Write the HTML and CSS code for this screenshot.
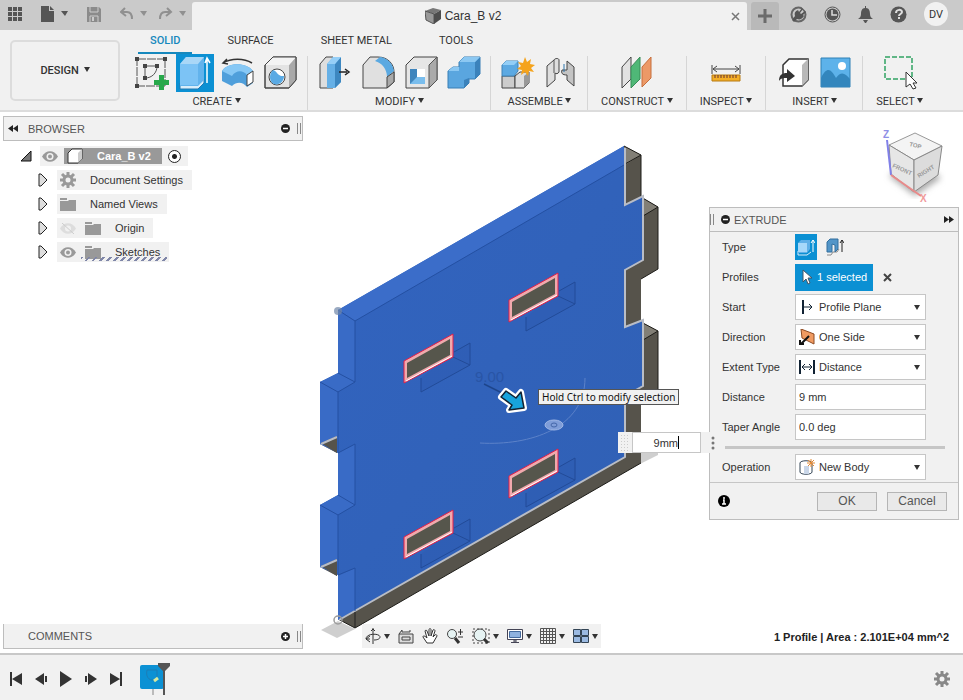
FILE: index.html
```html
<!DOCTYPE html>
<html lang="en">
<head>
    <meta charset="UTF-8">
    <meta name="viewport" content="width=device-width, initial-scale=1.0">
    <title>Cara_B v2</title>
    <link rel="stylesheet" href="styles.css">
</head>
<body>

    <!-- Top bar -->
    <header class="topbar">
        <div class="quick">
            <button class="icon-btn" aria-label="Data panel"><svg width="14" height="14" viewBox="0 0 14 14" fill="#555"><path d="M0 0h4v4H0zM5 0h4v4H5zM10 0h4v4h-4zM0 5h4v4H0zM5 5h4v4H5zM10 5h4v4h-4zM0 10h4v4H0zM5 10h4v4H5zM10 10h4v4h-4z"/></svg></button>
            <button class="icon-btn file-btn" aria-label="File"><svg width="27" height="16" viewBox="0 0 27 16" fill="#555"><path d="M0 0h8v5h5v11H0zM9 0l4 4H9zM20 5h7l-3 5z"/></svg></button>
            <button class="icon-btn save-btn" aria-label="Save"><svg width="14" height="15" viewBox="0 0 14 15"><path d="M0 0h12l2 2v13H0z" fill="#8b8b8b"/><path d="M3 0v5h8V0M3 15V9h8v6" fill="none" stroke="#ccc"/><path d="M5 10h2v4H5z" fill="#ccc"/></svg></button>
            <button class="icon-btn undo-btn" aria-label="Undo"><svg width="27" height="14" viewBox="0 0 27 14"><path d="M5 1L1 5l5 4M1 5h6c4 0 5 3 5 7" fill="none" stroke="#909090" stroke-width="2"/><path d="M20 4h7l-3 5z" fill="#909090"/></svg></button>
            <button class="icon-btn redo-btn" aria-label="Redo"><svg width="27" height="14" viewBox="0 0 27 14"><path d="M8 1l4 4-5 4M12 5H6c-4 0-5 3-5 7" fill="none" stroke="#909090" stroke-width="2"/><path d="M20 4h7l-3 5z" fill="#909090"/></svg></button>
        </div>
        <div class="doc-tab">
            <span class="doc-name">
                <svg width="16" height="16" viewBox="0 0 16 16"><path d="M0 3l8-3 8 2-7 4z" fill="#777"/><path d="M0 3l9 3v10l-8-4z" fill="#999" stroke="#555"/><path d="M9 6l7-4v9l-7 5z" fill="#4d4d4d"/></svg>
                Cara_B v2
            </span>
            <button class="icon-btn" aria-label="Close tab"><svg width="9" height="9" viewBox="0 0 9 9"><path d="M1 1l7 7M8 1L1 8" stroke="#777" stroke-width="1.5"/></svg></button>
        </div>
        <button class="icon-btn new-tab" aria-label="New tab"><svg width="14" height="14" viewBox="0 0 14 14"><path d="M7 0v14M0 7h14" stroke="#6b6b6b" stroke-width="3"/></svg></button>
        <div class="account">
            <button class="icon-btn" aria-label="Extensions"><svg width="17" height="17" viewBox="0 0 17 17"><circle cx="8.500" cy="8.500" r="7" fill="none" stroke="#666" stroke-width="2"/><path d="M2 14l3-4c-1-4 1-5 3-6l1 2 3-4 1 1-3 4 1 1 4-3 1 1-3 3 1 1c-2 3-4 4-7 3l-3 3z" fill="#555"/><path d="M12 0l5 5" stroke="#ccc" stroke-width="2"/></svg></button>
            <button class="icon-btn" aria-label="Job status"><svg width="17" height="17" viewBox="0 0 17 17"><circle cx="8.500" cy="8.500" r="7.500" fill="none" stroke="#555"/><circle cx="8.500" cy="8.500" r="6" fill="#555"/><path d="M8 4v5h5" fill="none" stroke="#ddd" stroke-width="1.500"/></svg></button>
            <button class="icon-btn" aria-label="Notifications"><svg width="15" height="17" viewBox="0 0 15 17" fill="#555"><path d="M7 0h1v2c3 0 4 3 4 6 0 2 1 4 3 5H0c2-1 3-3 3-5 0-3 1-6 4-6zM5 14h5l-2 3H7z"/></svg></button>
            <button class="icon-btn" aria-label="Help"><svg width="17" height="17" viewBox="0 0 17 17"><circle cx="8.500" cy="8.500" r="8" fill="#555"/><path d="M6 7c0-4 6-4 6-1 0 2-3 2-3 4M9 11v2" fill="none" stroke="#ddd" stroke-width="2"/></svg></button>
            <button class="avatar">DV</button>
        </div>
    </header>

    <!-- Ribbon -->
    <div class="ribbon">
        <button class="workspace-btn">DESIGN <span class="caret"></span></button>
        <div class="ribbon-main">
            <nav class="tabs">
                <a class="tab active" href="#solid">SOLID</a>
                <a class="tab" href="#surface">SURFACE</a>
                <a class="tab" href="#sheet">SHEET METAL</a>
                <a class="tab" href="#tools">TOOLS</a>
            </nav>
            <div class="groups">
                <section class="group first">
                    <div class="tools">
                        <button class="tool" aria-label="Create sketch"><svg viewBox="0 0 34 34"><path d="M2 3h28M30 3v27M30 30H2M2 30V3" fill="none" stroke="#555" stroke-dasharray="9 1"/><path d="M10 22V10h12c0 7-5 12-12 12" fill="none" stroke="#555"/><path d="M0 1h4v4H0zM28 1h4v4h-4zM0 28h4v4H0zM8 8h4v4H8zM20 8h4v4h-4zM8 20h4v4H8z" fill="#444"/><path d="M24 19h5v5h5v5h-5v5h-5v-5h-5v-5h5z" fill="#27a84a"/></svg></button>
                        <button class="tool on" aria-label="Extrude"><svg viewBox="0 0 34 34"><path d="M2 27v6h18l6-6v-4" fill="#d8edfb" stroke="#2478b0"/><path d="M2 8l6-7h18v23l-6 6H2z" fill="#62b3ec"/><path d="M2 8l6-7h18l-6 7z" fill="#a9d7f7"/><path d="M2 8h18v21H2z" fill="#7cc3f5"/><path d="M29 27V3M27 7l2-5 3 5" fill="none" stroke="#fff" stroke-width="1.500"/></svg></button>
                        <button class="tool" aria-label="Revolve"><svg viewBox="0 0 34 34"><path d="M2 7c8-5 21-5 29 0M6 3L2 7l5 1" fill="none" stroke="#333" stroke-width="1.500"/><path d="M1 15c5-9 25-9 31 0v12l-6 4c-4-5-10-6-15-1l-10-5z" fill="#4f9fdb"/><path d="M1 15c5-9 25-9 31 0l-6 4c-4-5-11-5-15 1z" fill="#87c8f5"/><path d="M26 19l6-4v11l-6 4z" fill="#fff" stroke="#444"/></svg></button>
                        <button class="tool" aria-label="Hole"><svg viewBox="0 0 34 34"><path d="M1 9l8-8h23v23l-7 8H1z" fill="#e3e3e3" stroke="#444"/><path d="M25 9l7-8v23l-7 8z" fill="#a9a9a9"/><path d="M1 9l8-8h23l-7 8z" fill="#f3f3f3"/><path d="M1 9l8-8h23v23l-7 8H1z" fill="none" stroke="#444"/><circle cx="13" cy="21" r="8" fill="#fff" stroke="#444"/><path d="M9 14c4 1 5 7 11 6 0 10-14 12-14 1 0-3 1-5 3-7z" fill="#5aaae4"/></svg></button>
                    </div>
                    <button class="group-label">CREATE <span class="caret"></span></button>
                </section>
                <section class="group">
                    <div class="tools">
                        <button class="tool" aria-label="Press pull"><svg viewBox="0 0 34 34"><path d="M2 8l6-7h7v31H2z" fill="#dedede" stroke="#444"/><path d="M9 8l6-7h8v25l-6 6H9z" fill="#66b0e6"/><path d="M17 8l6-7v25l-6 6z" fill="#3d87c0"/><path d="M9 8l6-7h8l-6 7z" fill="#96cff7"/><path d="M21 16h8M27 13l4 3-4 3" fill="none" stroke="#222" stroke-width="1.500"/></svg></button>
                        <button class="tool" aria-label="Fillet"><svg viewBox="0 0 34 34"><path d="M2 9l7-8h8c10 0 16 7 16 15v10l-7 6H2z" fill="#e0e0e0" stroke="#444"/><path d="M14 5l5-4c8 1 13 7 14 14l-7 6c0-8-5-14-12-16z" fill="#5ba9e1"/><path d="M26 21l7-5v10l-7 6z" fill="#aaa" stroke="#444"/></svg></button>
                        <button class="tool" aria-label="Shell"><svg viewBox="0 0 34 34"><path d="M2 9l8-8h23v23l-8 8H2z" fill="#e6e6e6" stroke="#444"/><path d="M25 9l8-8v23l-8 8z" fill="#aaa" stroke="#555"/><path d="M6 13h15v15H6z" fill="#fff"/><path d="M6 13h7v8l8 1v6H6z" fill="#3f85bd"/><path d="M6 28l7-7h8v7z" fill="#79bded"/></svg></button>
                        <button class="tool" aria-label="Combine"><svg viewBox="0 0 34 34"><path d="M1 15l5-4h6V6l5-5h16v17l-5 5h-6v4l-5 5H1z" fill="#5aa6df" stroke="#397fb5"/><path d="M28 6l5-5v17l-5 5zM17 24l5-2v5l-5 5z" fill="#3b82bb"/><path d="M12 6l5-5h16l-5 5zM1 15l5-4h6v4z" fill="#8cc8f2"/></svg></button>
                    </div>
                    <button class="group-label">MODIFY <span class="caret"></span></button>
                </section>
                <section class="group">
                    <div class="tools">
                        <button class="tool" aria-label="New component"><svg viewBox="0 0 34 34"><path d="M1 20h13v12H1z" fill="#ccc" stroke="#444"/><path d="M14 20l5-4h9v11l-5 5h-9z" fill="#ddd" stroke="#444"/><path d="M23 20l5-4v11l-5 5z" fill="#999"/><path d="M1 9l4-4h12v10l-4 5H1z" fill="#5ca9e2" stroke="#3f82b5"/><path d="M1 9l4-4h12l-4 4z" fill="#93cef6"/><path d="M24 1l2 5 4-3-1 5 5 1-4 3 3 4-5-1-1 5-3-4-4 3 1-5-5-1 4-3-3-4 5 1z" fill="#f5a31c"/></svg></button>
                        <button class="tool" aria-label="Joint"><svg viewBox="0 0 34 34"><path d="M3 10l7-6c1-2 5-2 5 0v12c-1 2-3 2-4 1v7l-8 7z" fill="#dedede" stroke="#444"/><path d="M10 4v13" stroke="#555"/><path d="M23 5l7 6v19l-7-6v-5c-5 0-6-2-5-5h5z" fill="#c4c4c4" stroke="#444"/><path d="M20 8v8" stroke="#2f77ad"/></svg></button>
                    </div>
                    <button class="group-label">ASSEMBLE <span class="caret"></span></button>
                </section>
                <section class="group single">
                    <div class="tools">
                        <button class="tool" aria-label="Offset plane"><svg viewBox="0 0 34 34"><path d="M2 11l9-10v22l-9 9z" fill="#e2e2e2" stroke="#444"/><path d="M11 11l9-10v22l-9 9z" fill="#4fb877" stroke="#398c58"/><path d="M22 11l9-10v21l-9 9z" fill="#ec9967" stroke="#c66e3c"/></svg></button>
                    </div>
                    <button class="group-label">CONSTRUCT <span class="caret"></span></button>
                </section>
                <section class="group single">
                    <div class="tools">
                        <button class="tool" aria-label="Measure"><svg viewBox="0 0 34 34"><path d="M3 9v9M31 9v9M4 13h26M8 10l-4 3 4 3M26 10l4 3-4 3" fill="none" stroke="#444"/><path d="M3 19h28v6H3z" fill="#f4ae26" stroke="#b77b13"/><path d="M6 19v3M9 19v3M12 19v3M15 19v3M18 19v3M21 19v3M24 19v3M27 19v3" stroke="#633"/></svg></button>
                    </div>
                    <button class="group-label">INSPECT <span class="caret"></span></button>
                </section>
                <section class="group">
                    <div class="tools">
                        <button class="tool" aria-label="Insert derive"><svg viewBox="0 0 34 34"><path d="M7 9l6-6h19v21l-6 6H7z" fill="#fff" stroke="#333" stroke-width="1.500"/><path d="M26 9l6-6v21l-6 6z" fill="#b9b9b9"/><path d="M3 25c0-6 3-8 8-8v-4l8 7-8 6v-4c-4 0-6 0-8 3z" fill="#333"/></svg></button>
                        <button class="tool" aria-label="Insert image"><svg viewBox="0 0 34 34"><path d="M2 2h29v29H2z" fill="#5db2ea" stroke="#2f80b5"/><path d="M2 22c6-12 10-9 15 0 5-7 9-5 14 1v8H2z" fill="#3386bd"/><circle cx="23" cy="10" r="4" fill="#fff"/></svg></button>
                    </div>
                    <button class="group-label">INSERT <span class="caret"></span></button>
                </section>
                <section class="group single">
                    <div class="tools">
                        <button class="tool" aria-label="Select"><svg viewBox="0 0 34 34"><path d="M2 1h27v22H2z" fill="none" stroke="#31a263" stroke-width="1.500" stroke-dasharray="5 2"/><path d="M23 16v15l4-3 3 5 3-1-3-5h4z" fill="#fff" stroke="#333"/></svg></button>
                    </div>
                    <button class="group-label">SELECT <span class="caret"></span></button>
                </section>
            </div>
        </div>
    </div>

    <!-- Modelling canvas and the panels floating over it -->
    <main class="canvas">
        <svg class="model" width="350" height="510" viewBox="315 135 350 510">
            <defs>
                <linearGradient id="front" x1="0" y1="0" x2="1" y2="1"><stop offset="0" stop-color="#3264c0"/><stop offset="1" stop-color="#3060b4"/></linearGradient>
                <g id="slot">
                    <path d="M421 378v14l49-27v-22l-16 9M453 357l17 8" fill="#2c5bb0" fill-opacity=".4" stroke="#224b98"/>
                    <path d="M404 361l49-27v23l-49 26z" fill="#f0a9ad" stroke="#e21e48"/>
                    <path d="M406 381l46-25" stroke="#fff"/>
                    <path d="M407 363l43-24v16l-43 23z" fill="#56564c"/>
                </g>
            </defs>
            <!-- shadow -->
            <path d="M321 630l17-9 17 8-18 9zM640 464l18-9v-4h-18z" fill="#cfcfcf"/>
            <!-- back body -->
            <path d="M624 146l17 9v42l17 10v62l-17 10v43l17 9v62l-17 10v60L355 628l-17-9z" fill="#56534b"/>
            <path d="M624 146l17 9-16 10zM641 197l17 10-15 9zM641 322l17 9-15 9z" fill="#827f76"/>
            <path d="M624 146l17 9v42l17 10v62l-17 10M641 322l17 9v62M641 155l-16 9M658 207l-15 9M658 331l-15 9M641 463L355 628l-17-9" fill="none" stroke="#1d1c18"/>
            <path d="M320 444l17-9v18zM320 567l17-9v18z" fill="#56534b"/>
            <!-- preview body -->
            <path d="M338 310l286-164v59l19-9v64l-18 10v57l18-7v66l-18 10v61L338 620v-59l-18 6v-62l18-10v-58l-18 7v-62l18-9z" fill="url(#front)"/>
            <path d="M338 310l286-164v19L355 321z" fill="#3b6dc9"/>
            <path d="M338 310l17 11v61l-17 10-18-10 18-9zM320 382l18 10v61l-18-9zM338 453l17-9v61l-17 10-18-10 18-10zM320 505l18 10v60l-18-8zM338 576l17-8v42l-17 10z" fill="#396bc6"/>
            <path d="M321 443l16-7v17zM321 566l16-7v17z" fill="#56534b"/>
            <path d="M321 444l16-7M321 567l16-7M625 148v57l18-9v64l-18 10v57l18-7v66l-18 10v61L339 620" fill="none" stroke="#b9bdc6" stroke-width="2"/>
            <path d="M338 310l17 11 269-156M355 321v61l-17 10-18-10M338 392v61l17-9v61l-17 10-18-10M338 515v60l17-7v43M338 373l17 9M338 495l17 10" fill="none" stroke="#2450a2"/>
            <path d="M355 612v16" stroke="#222"/>
            <use href="#slot"/>
            <use href="#slot" x="105" y="-61"/>
            <use href="#slot" y="176"/>
            <use href="#slot" x="105" y="115"/>
            <!-- manipulators -->
            <path d="M480 443c50 3 105-15 105-65" fill="none" stroke="#5c82c9"/>
            <ellipse cx="554" cy="425" rx="9" ry="5" fill="#7f9dd8" stroke="#a1b8e5"/>
            <ellipse cx="554" cy="425" rx="3" ry="2" fill="none" stroke="#4466a8"/>
            <text class="dim" x="475" y="382">9.00</text>
            <path d="M484 384l18 9" stroke="#1e458b" stroke-width="1.500"/>
            <path d="M501 397l5-6 10 7 5-6 3 16-15 2 3-5z" fill="#fff" stroke="#fff" stroke-width="6" stroke-linejoin="round"/>
            <path d="M501 397l5-6 10 7 5-6 3 16-15 2 3-5z" fill="#18a3dc" stroke="#123" stroke-width="1.500" stroke-linejoin="round"/>
            <circle cx="338" cy="311" r="4" fill="#6f86a8" fill-opacity=".7"/>
            <circle cx="338" cy="620" r="4" fill="none" stroke="#9c9c9c" stroke-width="1.500"/>
        </svg>

        <svg class="viewcube" width="66" height="80" viewBox="880 126 66 80">
            <defs><filter id="soft"><feGaussianBlur stdDeviation="3"/></filter></defs>
            <path d="M889 176l26 20 26-18-10-8h-34z" fill="#aaa" filter="url(#soft)"/>
            <path d="M889 145l26-12 27 13-28 14z" fill="#f4f4f4" stroke="#999"/>
            <path d="M889 145l25 15v32l-23-18z" fill="#e6e6e6" stroke="#888"/>
            <path d="M942 146l-28 14v32l24-17z" fill="#dcdcdc" stroke="#888"/>
            <path d="M887 140l4 35" stroke="#8080e8" stroke-width="2"/>
            <path d="M891 175l30 21" stroke="#e88a8a" stroke-width="2"/>
            <text class="axis-z" x="883" y="138">Z</text>
            <text class="axis-x" x="920" y="202">X</text>
            <text class="face" transform="translate(909 146) rotate(14)">TOP</text>
            <text class="face" transform="translate(892 167) rotate(24)">FRONT</text>
            <text class="face" transform="translate(919 178) rotate(-32)">RIGHT</text>
        </svg>

        <aside class="browser">
            <header class="panel-head">
                <button class="icon-btn" aria-label="Collapse"><svg width="10" height="7" viewBox="0 0 10 7"><path d="M5 0v7L0 3.500zM10 0v7L5 3.500z" fill="#222"/></svg></button>
                <h2>BROWSER</h2>
                <button class="icon-btn" aria-label="Hide browser"><svg width="9" height="9" viewBox="0 0 9 9"><circle cx="4.500" cy="4.500" r="4.500" fill="#222"/><path d="M2 4.500h5" stroke="#fff" stroke-width="1.500"/></svg></button>
                <span class="grip"></span>
            </header>
            <ul class="tree">
                <li class="node root">
                    <svg width="12" height="12" viewBox="0 0 12 12"><path d="M11 1v10H1z" fill="#777" stroke="#111"/></svg>
                    <span class="node-body">
                        <svg width="16" height="11" viewBox="0 0 16 11"><path d="M0 5.500c4-7 12-7 16 0-4 7-12 7-16 0z" fill="#999"/><circle cx="8" cy="5.500" r="3.500" fill="#f1f1f1"/><circle cx="8" cy="5.500" r="2" fill="#999"/></svg>
                        <span class="node-sel">
                            <svg width="16" height="16" viewBox="0 0 16 16"><path d="M1 5l4-4h10v10l-4 4H1z" fill="#fff" stroke="#333"/><path d="M11 5l4-4v10l-4 4z" fill="#ccc"/></svg>
                            Cara_B v2
                        </span>
                        <input class="activate" type="radio" aria-label="Activate component" checked>
                    </span>
                </li>
                <li class="node">
                    <svg width="10" height="14" viewBox="0 0 10 14"><path d="M1 1h2l6 6-6 6H1z" fill="#ddd" stroke="#222"/></svg>
                    <span class="node-body">
                        <svg width="16" height="16" viewBox="0 0 16 16"><circle cx="8" cy="8" r="4" fill="none" stroke="#999" stroke-width="3"/><path d="M8 0v3M8 13v3M0 8h3M13 8h3M2 2l3 3M11 11l3 3M14 2l-3 3M5 11l-3 3" stroke="#999" stroke-width="3"/></svg>
                        <span class="node-name">Document Settings</span>
                    </span>
                </li>
                <li class="node">
                    <svg width="10" height="14" viewBox="0 0 10 14"><path d="M1 1h2l6 6-6 6H1z" fill="#ddd" stroke="#222"/></svg>
                    <span class="node-body">
                        <svg width="16" height="13" viewBox="0 0 16 13"><path d="M0 0h7v2H0zM0 3h8l1-1h7v11H0z" fill="#999"/></svg>
                        <span class="node-name">Named Views</span>
                    </span>
                </li>
                <li class="node">
                    <svg width="10" height="14" viewBox="0 0 10 14"><path d="M1 1h2l6 6-6 6H1z" fill="#ddd" stroke="#222"/></svg>
                    <span class="node-body">
                        <svg width="16" height="11" viewBox="0 0 16 11"><path d="M0 5.500c4-7 12-7 16 0-4 7-12 7-16 0z" fill="#ddd"/><circle cx="8" cy="5.500" r="3" fill="#f1f1f1"/><path d="M2 0l12 11" stroke="#ccc"/></svg>
                        <svg width="16" height="13" viewBox="0 0 16 13"><path d="M0 0h7v2H0zM0 3h8l1-1h7v11H0z" fill="#999"/></svg>
                        <span class="node-name">Origin</span>
                    </span>
                </li>
                <li class="node">
                    <svg width="10" height="14" viewBox="0 0 10 14"><path d="M1 1h2l6 6-6 6H1z" fill="#ddd" stroke="#222"/></svg>
                    <span class="node-body hatched">
                        <svg width="16" height="11" viewBox="0 0 16 11"><path d="M0 5.500c4-7 12-7 16 0-4 7-12 7-16 0z" fill="#999"/><circle cx="8" cy="5.500" r="3.500" fill="#f1f1f1"/><circle cx="8" cy="5.500" r="2" fill="#999"/></svg>
                        <svg width="16" height="13" viewBox="0 0 16 13"><path d="M0 0h7v2H0zM0 3h8l1-1h7v11H0z" fill="#999"/></svg>
                        <span class="node-name">Sketches</span>
                    </span>
                </li>
            </ul>
        </aside>

        <form class="extrude" onsubmit="return false">
            <header class="panel-head">
                <span class="grip"></span>
                <button type="button" class="icon-btn" aria-label="Collapse dialog"><svg width="9" height="9" viewBox="0 0 9 9"><circle cx="4.500" cy="4.500" r="4.500" fill="#222"/><path d="M2 4.500h5" stroke="#fff" stroke-width="1.500"/></svg></button>
                <h2>EXTRUDE</h2>
                <button type="button" class="icon-btn" aria-label="Dock"><svg width="10" height="7" viewBox="0 0 10 7"><path d="M0 0v7l5-3.500zM5 0v7l5-3.500z" fill="#222"/></svg></button>
            </header>
            <div class="fields">
                <div class="field">
                    <span>Type</span>
                    <div class="types">
                        <button type="button" class="type on" aria-label="Solid extrude"><svg width="18" height="18" viewBox="0 0 18 18"><path d="M1 13v4h9l4-3" fill="none" stroke="#d8edfb"/><path d="M1 5l3-3h9v9l-3 4H1z" fill="#5fb0e8"/><path d="M1 5h9v9H1z" fill="#a6d8fa"/><path d="M16 14V2M14 5l2-3 2 3" fill="none" stroke="#fff"/></svg></button>
                        <button type="button" class="type" aria-label="Thin extrude"><svg width="18" height="18" viewBox="0 0 18 18"><path d="M1 17h4l2-3h4l2-3" fill="none" stroke="#888"/><path d="M1 4l3-3h8v10l-3 3V7L6 6v8H1z" fill="#5295c8" stroke="#336f9d"/><path d="M16 14V2M14 5l2-3 2 3" fill="none" stroke="#222"/></svg></button>
                    </div>
                </div>
                <div class="field">
                    <span>Profiles</span>
                    <div class="types">
                        <button type="button" class="selected"><svg width="10" height="16" viewBox="0 0 10 16"><path d="M1 1v12l3-3 2 5 2-1-2-5h4z" fill="#fff" stroke="#456"/></svg>1 selected</button>
                        <button type="button" class="icon-btn clear" aria-label="Clear selection"><svg width="9" height="9" viewBox="0 0 9 9"><path d="M1 1l7 7M8 1L1 8" stroke="#444" stroke-width="2"/></svg></button>
                    </div>
                </div>
                <div class="field">
                    <label for="start">Start</label>
                    <div class="drop">
                        <svg width="16" height="16" viewBox="0 0 16 16"><path d="M4 1v14" stroke="#123" stroke-width="2"/><path d="M4 8h9M10 5l3 3-3 3" fill="none" stroke="#123"/></svg>
                        <select id="start"><option>Profile Plane</option></select>
                    </div>
                </div>
                <div class="field">
                    <label for="direction">Direction</label>
                    <div class="drop">
                        <svg width="16" height="16" viewBox="0 0 16 16"><path d="M2 0l13 5v10L3 9z" fill="#f09b62" stroke="#8d4a22"/><path d="M10 7l-8 8M1 11v4h4" fill="none" stroke="#111" stroke-width="2"/></svg>
                        <select id="direction"><option>One Side</option></select>
                    </div>
                </div>
                <div class="field">
                    <label for="extent">Extent Type</label>
                    <div class="drop">
                        <svg width="16" height="16" viewBox="0 0 16 16"><path d="M1 1v14M15 1v14" stroke="#123" stroke-width="2"/><path d="M3 8h10M6 5L3 8l3 3M10 5l3 3-3 3" fill="none" stroke="#123"/></svg>
                        <select id="extent"><option>Distance</option></select>
                    </div>
                </div>
                <div class="field">
                    <label for="distance">Distance</label>
                    <input class="text" id="distance" type="text" value="9 mm">
                </div>
                <div class="field">
                    <label for="taper">Taper Angle</label>
                    <input class="text" id="taper" type="text" value="0.0 deg">
                </div>
                <hr>
                <div class="field">
                    <label for="operation">Operation</label>
                    <div class="drop">
                        <svg width="16" height="16" viewBox="0 0 16 16"><path d="M1 4c0-3 12-3 12 0v9c0 3-12 3-12 0z" fill="#fff" stroke="#345"/><path d="M5 7h5v8H5z" fill="#c9d6e8"/><path d="M12 0v8M8 4h8M9 1l6 6M15 1L9 7" stroke="#e58a35"/></svg>
                        <select id="operation"><option>New Body</option></select>
                    </div>
                </div>
            </div>
            <footer class="actions">
                <button type="button" class="icon-btn info" aria-label="Info"><svg width="12" height="12" viewBox="0 0 12 12"><circle cx="6" cy="6" r="6" fill="#000"/><path d="M6 2v2M5 5h1v4M4 9h4" fill="none" stroke="#fff" stroke-width="1.500"/></svg></button>
                <button class="btn">OK</button>
                <button type="button" class="btn">Cancel</button>
            </footer>
        </form>

        <div class="tooltip" role="tooltip">Hold Ctrl to modify selection</div>

        <div class="value-box">
            <span class="dots"></span>
            <input type="text" aria-label="Distance value" value="9mm">
            <button class="icon-btn" aria-label="More"><svg width="4" height="14" viewBox="0 0 4 14" fill="#777"><circle cx="2" cy="2" r="1.500"/><circle cx="2" cy="7" r="1.500"/><circle cx="2" cy="12" r="1.500"/></svg></button>
        </div>

        <section class="comments panel-head">
            <h2>COMMENTS</h2>
            <button class="icon-btn" aria-label="Show comments"><svg width="9" height="9" viewBox="0 0 9 9"><circle cx="4.500" cy="4.500" r="4.500" fill="#222"/><path d="M2 4.500h5M4.500 2v5" stroke="#fff" stroke-width="1.500"/></svg></button>
            <span class="grip"></span>
        </section>

        <nav class="navbar">
            <button class="icon-btn" aria-label="Orbit"><svg width="16" height="16" viewBox="0 0 16 16"><path d="M8 0v16M6 3l2-2 2 2M5 11H1c0-6 14-6 14-2 0 2-3 3-6 3M5 8l-4 3 4 3" fill="none" stroke="#333"/></svg><span class="caret"></span></button>
            <button class="icon-btn" aria-label="Look at"><svg width="16" height="16" viewBox="0 0 16 16"><path d="M1 6h14v9H1zM1 6l3-4v2h8V2M4 9h8v3H4z" fill="#ddd" stroke="#444"/></svg></button>
            <button class="icon-btn" aria-label="Pan"><svg width="16" height="16" viewBox="0 0 16 16"><path d="M5 15L1 9c0-2 2-1 4 1L3 3c0-1 2-1 2 0l2 5V2c0-2 2-2 2 0v6l2-6c1-1 2 0 2 1l-2 6 2-2c1-1 2 0 2 1l-4 7z" fill="#fff" stroke="#333"/></svg></button>
            <button class="icon-btn" aria-label="Zoom"><svg width="18" height="16" viewBox="0 0 18 16"><circle cx="6" cy="6" r="4.500" fill="#e6f3f3" stroke="#444"/><path d="M9 10l4 5" stroke="#333" stroke-width="3"/><path d="M12 4h5M14.500 1v6M12 9h5" stroke="#333"/></svg></button>
            <button class="icon-btn" aria-label="Fit"><svg width="18" height="16" viewBox="0 0 18 16"><path d="M1 1h16v14H1z" fill="none" stroke="#444" stroke-dasharray="2 2"/><circle cx="8" cy="7" r="6" fill="#e6f3f3" stroke="#444"/><path d="M12 11l4 4" stroke="#333" stroke-width="3"/></svg><span class="caret"></span></button>
            <button class="icon-btn" aria-label="Display settings"><svg width="16" height="16" viewBox="0 0 16 16"><path d="M.5 1.500h15v10H.5zM4 14.500h8M7 12h2v2H7z" fill="#fff" stroke="#445"/><path d="M2.500 3.500h11v6h-11z" fill="#8fb2df" stroke="#446a9d"/></svg><span class="caret"></span></button>
            <button class="icon-btn" aria-label="Grid and snaps"><svg width="16" height="16" viewBox="0 0 16 16"><path d="M.5.500h15v15H.5zM3.500 0v16M6.500 0v16M9.500 0v16M12.500 0v16M0 3.500h16M0 6.500h16M0 9.500h16M0 12.500h16" fill="none" stroke="#555"/></svg><span class="caret"></span></button>
            <button class="icon-btn" aria-label="Viewports"><svg width="16" height="14" viewBox="0 0 16 14"><path d="M.5.500h7v6h-7zM8.500.500h7v6h-7zM.5 7.500h7v6h-7zM8.500 7.500h7v6h-7z" fill="#9bbae2" stroke="#345"/></svg><span class="caret"></span></button>
        </nav>

        <p class="status">1 Profile | Area : 2.101E+04 mm^2</p>
    </main>

    <!-- Timeline -->
    <footer class="timeline">
        <button class="icon-btn" aria-label="Go to start"><svg width="12" height="14" viewBox="0 0 12 14" fill="#333"><path d="M0 0h2v14H0zM12 1v12L2 7z"/></svg></button>
        <button class="icon-btn" aria-label="Step back"><svg width="12" height="14" viewBox="0 0 12 14" fill="#333"><path d="M9 1v12L0 7zM10 4h2v6h-2z"/></svg></button>
        <button class="icon-btn" aria-label="Play"><svg width="12" height="16" viewBox="0 0 12 16" fill="#333"><path d="M0 0l12 8-12 8z"/></svg></button>
        <button class="icon-btn" aria-label="Step forward"><svg width="12" height="14" viewBox="0 0 12 14" fill="#333"><path d="M3 1v12l9-6zM0 4h2v6H0z"/></svg></button>
        <button class="icon-btn" aria-label="Go to end"><svg width="12" height="14" viewBox="0 0 12 14" fill="#333"><path d="M10 0h2v14h-2zM0 1v12l10-6z"/></svg></button>
        <button class="icon-btn feature" aria-label="Sketch1"><svg width="30" height="32" viewBox="0 0 30 32"><rect y="2" width="24" height="24" rx="2" fill="#0c91d4"/><path d="M7 7h10v8c-6 5-12 0-10-8z" fill="none" stroke="#1d7db5"/><path d="M14 18l4-3" stroke="#d7e9a0" stroke-width="3"/><path d="M13 26v6" stroke="#bbb" stroke-width="2"/><path d="M18 0h12v3l-5 5v24h-2V8l-5-5z" fill="#555"/></svg></button>
        <button class="icon-btn settings" aria-label="Timeline settings"><svg width="16" height="16" viewBox="0 0 16 16"><circle cx="8" cy="8" r="4" fill="none" stroke="#888" stroke-width="3"/><path d="M8 0v3M8 13v3M0 8h3M13 8h3M2 2l3 3M11 11l3 3M14 2l-3 3M5 11l-3 3" stroke="#888" stroke-width="3"/></svg></button>
    </footer>

</body>
</html>
```

FILE: styles.css
```css
* {
    box-sizing: border-box;
}
body {
    margin: 0;
    height: 100vh;
    display: flex;
    flex-direction: column;
    font-family: "Liberation Sans", Arial, sans-serif;
    font-size: 11px;
    color: #333;
    background: #fff;
}
button, input, select {
    font: inherit;
    color: inherit;
    margin: 0;
}
h2, p, ul {
    margin: 0;
    padding: 0;
}
svg {
    display: block;
    flex: none;
}
.icon-btn {
    display: flex;
    align-items: center;
    gap: 3px;
    padding: 0;
    border: none;
    background: none;
}
.caret {
    display: inline-block;
    border: 3px solid transparent;
    border-top: 5px solid #333;
    border-bottom: 0;
}

/* top bar */
.topbar {
    display: flex;
    height: 30px;
    padding-top: 2px;
    background: #cacaca;
}
.quick {
    display: flex;
    align-items: center;
    width: 192px;
    padding: 0 8px 4px;
}
.file-btn, .save-btn, .undo-btn {
    margin-left: 19px;
}
.redo-btn {
    margin-left: 12px;
}
.doc-tab {
    flex: 1;
    display: flex;
    align-items: center;
    padding: 0 7px;
    background: #f1f1f1;
    border-radius: 3px 3px 0 0;
}
.doc-name {
    flex: 1;
    display: flex;
    justify-content: center;
    align-items: center;
    gap: 4px;
    padding-right: 4px;
    font-size: 12px;
}
.new-tab {
    justify-content: center;
    width: 28px;
    margin-left: 4px;
    background: #b9b9b9;
    border-radius: 3px 3px 0 0;
}
.account {
    display: flex;
    align-items: center;
    gap: 17px;
    padding: 0 15px 4px 11px;
}
.avatar {
    width: 24px;
    height: 24px;
    padding: 0;
    border: none;
    border-radius: 50%;
    background: #f1f1f1;
    font-family: Roboto, sans-serif;
}

/* ribbon */
.ribbon {
    display: flex;
    height: 82px;
    background: #f1f1f1;
    border-bottom: 2px solid #dcdcdc;
    font-family: Roboto, sans-serif;
}
.workspace-btn {
    flex: none;
    width: 110px;
    height: 61px;
    margin: 10px 15px 0 10px;
    border: 2px solid #dcdcdc;
    border-radius: 5px;
    background: none;
    font-weight: 500;
}
.workspace-btn .caret, .group-label .caret {
    margin-bottom: 2px;
}
.workspace-btn .caret {
    margin-left: 2px;
}
.tabs {
    display: flex;
    gap: 47px;
    padding-left: 15px;
}
.tab {
    height: 24px;
    line-height: 22px;
    color: #333;
    text-decoration: none;
}
.tab.active {
    margin: 0 -12px;
    padding: 0 12px;
    color: #1688bd;
    font-weight: 500;
    border-bottom: 2px solid #1688bd;
}
.groups {
    display: flex;
    padding-top: 2px;
}
.group {
    padding: 0 9px 0 10px;
    border-left: 1px solid #d6d6d6;
}
.group.first {
    padding-left: 0;
    border-left: none;
}
.group.single {
    padding: 0 13px;
}
.tools {
    display: flex;
    justify-content: center;
    gap: 9px;
}
.tool {
    width: 34px;
    height: 34px;
    padding: 0;
    border: none;
    background: none;
}
.tool.on {
    background: #0b90d3;
    outline: 2px solid #0b90d3;
}
.group-label {
    display: block;
    margin: 3px auto 0;
    padding: 0;
    border: none;
    background: none;
    line-height: 17px;
    white-space: nowrap;
}

/* canvas */
.canvas {
    position: relative;
    flex: 1;
    min-height: 540px;
    background: #fff;
}
.model {
    position: absolute;
    left: 315px;
    top: 23px;
}
.dim {
    font-size: 15px;
    fill: #2955a6;
}
.viewcube {
    position: absolute;
    right: 17px;
    top: 14px;
    font-weight: bold;
}
.face {
    font-size: 6px;
    fill: #999;
}
.axis-z {
    font-size: 10px;
    fill: #8f8fe6;
}
.axis-x {
    font-size: 10px;
    fill: #f09a9a;
}

/* panels */
.panel-head {
    display: flex;
    align-items: center;
    height: 25px;
    padding: 0 4px;
    background: #f1f1f1;
    border: 1px solid #bdbdbd;
}
.panel-head h2 {
    flex: 1;
    font-size: 11px;
    font-weight: normal;
    color: #555;
}
.grip {
    width: 4px;
    height: 11px;
    border: solid #888;
    border-width: 0 1px;
}
.browser, .comments {
    position: absolute;
    left: 3px;
    width: 300px;
}
.browser {
    top: 4px;
}
.browser h2 {
    margin-left: 10px;
}
.browser .grip, .comments .grip {
    margin: 0 -3px 0 7px;
}
.comments {
    bottom: 4px;
    border-top: none;
}
.comments h2 {
    margin-left: 20px;
}
.tree {
    padding: 3px 0 0 35px;
    list-style: none;
}
.node {
    display: flex;
    align-items: center;
    gap: 9px;
    height: 24px;
}
.node.root {
    margin-left: -18px;
    gap: 8px;
}
.node-body {
    display: flex;
    align-items: center;
    gap: 9px;
    height: 20px;
    padding: 0 9px 0 3px;
    background: #f1f1f1;
}
.node-name {
    margin-left: 5px;
}
.root .node-body {
    gap: 6px;
    padding: 0 7px 0 2px;
}
.node-sel {
    display: flex;
    align-items: center;
    gap: 14px;
    width: 98px;
    height: 16px;
    padding-left: 3px;
    background: #999;
    color: #fff;
    font-weight: bold;
}
.activate {
    appearance: none;
    width: 13px;
    height: 13px;
    border: 1px solid #222;
    border-radius: 50%;
    background: radial-gradient(#222 2px, #fff 3px);
}
.hatched {
    position: relative;
}
.hatched::after {
    content: "";
    position: absolute;
    left: 24px;
    right: 2px;
    bottom: 1px;
    height: 4px;
    background: repeating-linear-gradient(135deg, #7f86a8 0 2px, transparent 2px 5px);
}

/* extrude dialog */
.extrude {
    position: absolute;
    right: 4px;
    top: 95px;
    width: 250px;
    background: #f1f1f1;
    border: 1px solid #bdbdbd;
}
.extrude .panel-head {
    height: 24px;
    border-width: 0 0 1px;
    padding: 0 4px 0 0;
}
.extrude .grip {
    margin-right: 7px;
}
.extrude h2 {
    margin-left: 4px;
}
.fields {
    padding-left: 12px;
}
.field {
    display: grid;
    grid-template-columns: 73px 131px;
    align-items: center;
    height: 30px;
}
.types {
    display: flex;
    align-items: center;
    gap: 10px;
    white-space: nowrap;
}
.type {
    padding: 4px 2px;
    border: none;
    background: none;
}
.type.on, .selected {
    background: #0b90d3;
}
.type.on {
    margin-right: -3px;
}
.selected {
    display: flex;
    align-items: center;
    gap: 5px;
    height: 27px;
    padding: 0 6px 0 7px;
    border: none;
    color: #fff;
}
.drop, .text {
    height: 26px;
    background: #fff;
    border: 1px solid #c6c6c6;
}
.drop {
    position: relative;
    display: flex;
    align-items: center;
    padding-left: 3px;
}
.drop select {
    flex: 1;
    height: 100%;
    padding: 0 4px;
    border: none;
    appearance: none;
    background: none;
}
.drop::after {
    content: "";
    position: absolute;
    right: 5px;
    border: 3px solid transparent;
    border-top: 5px solid #333;
    border-bottom: 0;
    pointer-events: none;
}
.text {
    width: 100%;
    padding: 0 3px;
}
.fields hr {
    height: 3px;
    margin: 4px 13px 3px 3px;
    border: none;
    background: #c6c6c6;
}
.actions {
    display: flex;
    align-items: center;
    gap: 10px;
    height: 37px;
    padding: 0 11px 0 8px;
    border-top: 1px solid #c6c6c6;
}
.info {
    margin-right: auto;
}
.btn {
    width: 60px;
    height: 19px;
    padding: 0;
    border: 1px solid #b5b5b5;
    background: #e9e9e9;
    font-size: 12px;
    color: #555;
}

/* things on top of the model */
.tooltip {
    position: absolute;
    left: 538px;
    top: 277px;
    padding: 0 3px;
    line-height: 14px;
    border: 1px solid #555;
    background: #f1f1f1;
    color: #111;
    font-family: "Noto Sans", sans-serif;
    font-size: 10px;
    white-space: nowrap;
}
.value-box {
    position: absolute;
    left: 618px;
    top: 320px;
    display: flex;
    align-items: center;
    height: 21px;
    padding-right: 3px;
    background: #f1f1f1;
}
/* text cursor */
.value-box::after {
    content: "";
    position: absolute;
    left: 60px;
    width: 1px;
    height: 13px;
    background: #000;
}
.dots {
    width: 10px;
    height: 17px;
    margin: 0 2px;
    background: radial-gradient(#ccc 1px, transparent 1px) 0 0 / 3px 3px;
}
.value-box input {
    width: 69px;
    height: 21px;
    padding: 0 22px 0 0;
    margin-right: 10px;
    border: 1px solid #c6c6c6;
    background: #fff;
    text-align: right;
}
.navbar {
    position: absolute;
    left: 362px;
    bottom: 5px;
    display: flex;
    align-items: center;
    gap: 8px;
    height: 24px;
    padding: 0 3px;
    background: #f1f1f1;
}
.status {
    position: absolute;
    right: 14px;
    bottom: 10px;
    font-weight: bold;
    color: #222;
}

/* timeline */
.timeline {
    display: flex;
    align-items: center;
    gap: 13px;
    height: 47px;
    padding: 3px 13px 0 10px;
    background: #f1f1f1;
    border-top: 2px solid #c8c8c8;
}
.feature {
    margin-left: 5px;
}
.settings {
    margin-left: auto;
}
```
